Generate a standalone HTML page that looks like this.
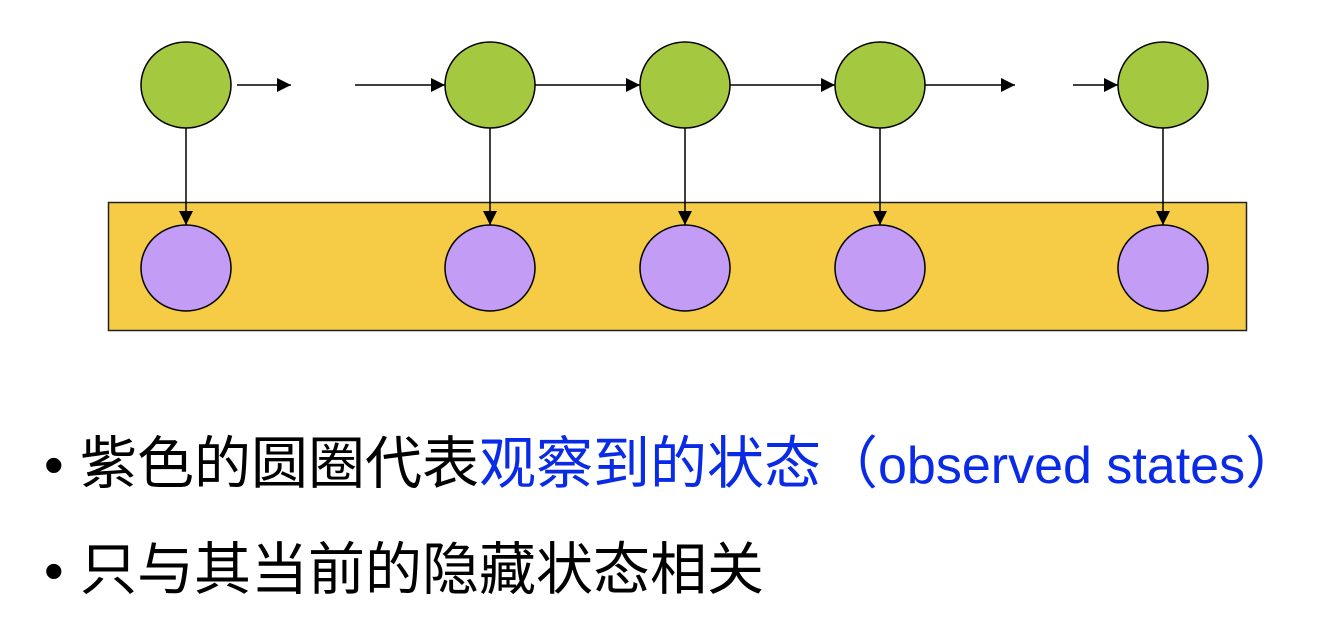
<!DOCTYPE html><html><head><meta charset="utf-8"><style>
body{margin:0;width:1344px;height:642px;background:#fff;overflow:hidden;position:relative}
.t{position:absolute;left:80px;font-family:"Liberation Sans","Noto Sans CJK SC",sans-serif;font-size:57px;line-height:56px;white-space:nowrap;color:#000}
.d{position:absolute;left:44px;font-family:"Liberation Sans",sans-serif;font-size:56px;line-height:56px}
.b{color:#0a2be6}
.l{font-size:52px}
</style></head><body>
<svg width="1344" height="642" style="position:absolute;left:0;top:0">
<defs><marker id="v" markerWidth="14" markerHeight="14" refX="14" refY="7" orient="auto" markerUnits="userSpaceOnUse"><path d="M0,0L14,7L0,14z" fill="#000"/></marker></defs>
<rect x="108.5" y="202.5" width="1138" height="128" fill="#f6cb45" stroke="#222" stroke-width="1.5"/>
<g stroke="#000" stroke-width="1.5">
<line x1="237" y1="85" x2="291" y2="85" marker-end="url(#v)"/>
<line x1="355" y1="85" x2="445" y2="85" marker-end="url(#v)"/>
<line x1="535" y1="85" x2="640" y2="85" marker-end="url(#v)"/>
<line x1="730" y1="85" x2="835" y2="85" marker-end="url(#v)"/>
<line x1="925" y1="85" x2="1015" y2="85" marker-end="url(#v)"/>
<line x1="1073" y1="85" x2="1118" y2="85" marker-end="url(#v)"/>
<line x1="186" y1="128" x2="186" y2="225" marker-end="url(#v)"/>
<line x1="490" y1="128" x2="490" y2="225" marker-end="url(#v)"/>
<line x1="685" y1="128" x2="685" y2="225" marker-end="url(#v)"/>
<line x1="880" y1="128" x2="880" y2="225" marker-end="url(#v)"/>
<line x1="1163" y1="128" x2="1163" y2="225" marker-end="url(#v)"/>
</g>
<g stroke="#000" stroke-width="1.5" fill="#a4c83f">
<ellipse cx="186" cy="85" rx="45" ry="43"/><ellipse cx="490" cy="85" rx="45" ry="43"/><ellipse cx="685" cy="85" rx="45" ry="43"/><ellipse cx="880" cy="85" rx="45" ry="43"/><ellipse cx="1163" cy="85" rx="45" ry="43"/>
</g>
<g stroke="#000" stroke-width="1.5" fill="#c39cf5">
<ellipse cx="186" cy="268" rx="45" ry="43"/><ellipse cx="490" cy="268" rx="45" ry="43"/><ellipse cx="685" cy="268" rx="45" ry="43"/><ellipse cx="880" cy="268" rx="45" ry="43"/><ellipse cx="1163" cy="268" rx="45" ry="43"/>
</g>
</svg>
<div class="d" style="top:437px">•</div>
<div class="t" style="top:436px">紫色的圆圈代表<span class="b">观察到的状态（<span class="l">observed states</span>）</span></div>
<div class="d" style="top:543px">•</div>
<div class="t" style="top:542px">只与其当前的隐藏状态相关</div>
</body></html>
